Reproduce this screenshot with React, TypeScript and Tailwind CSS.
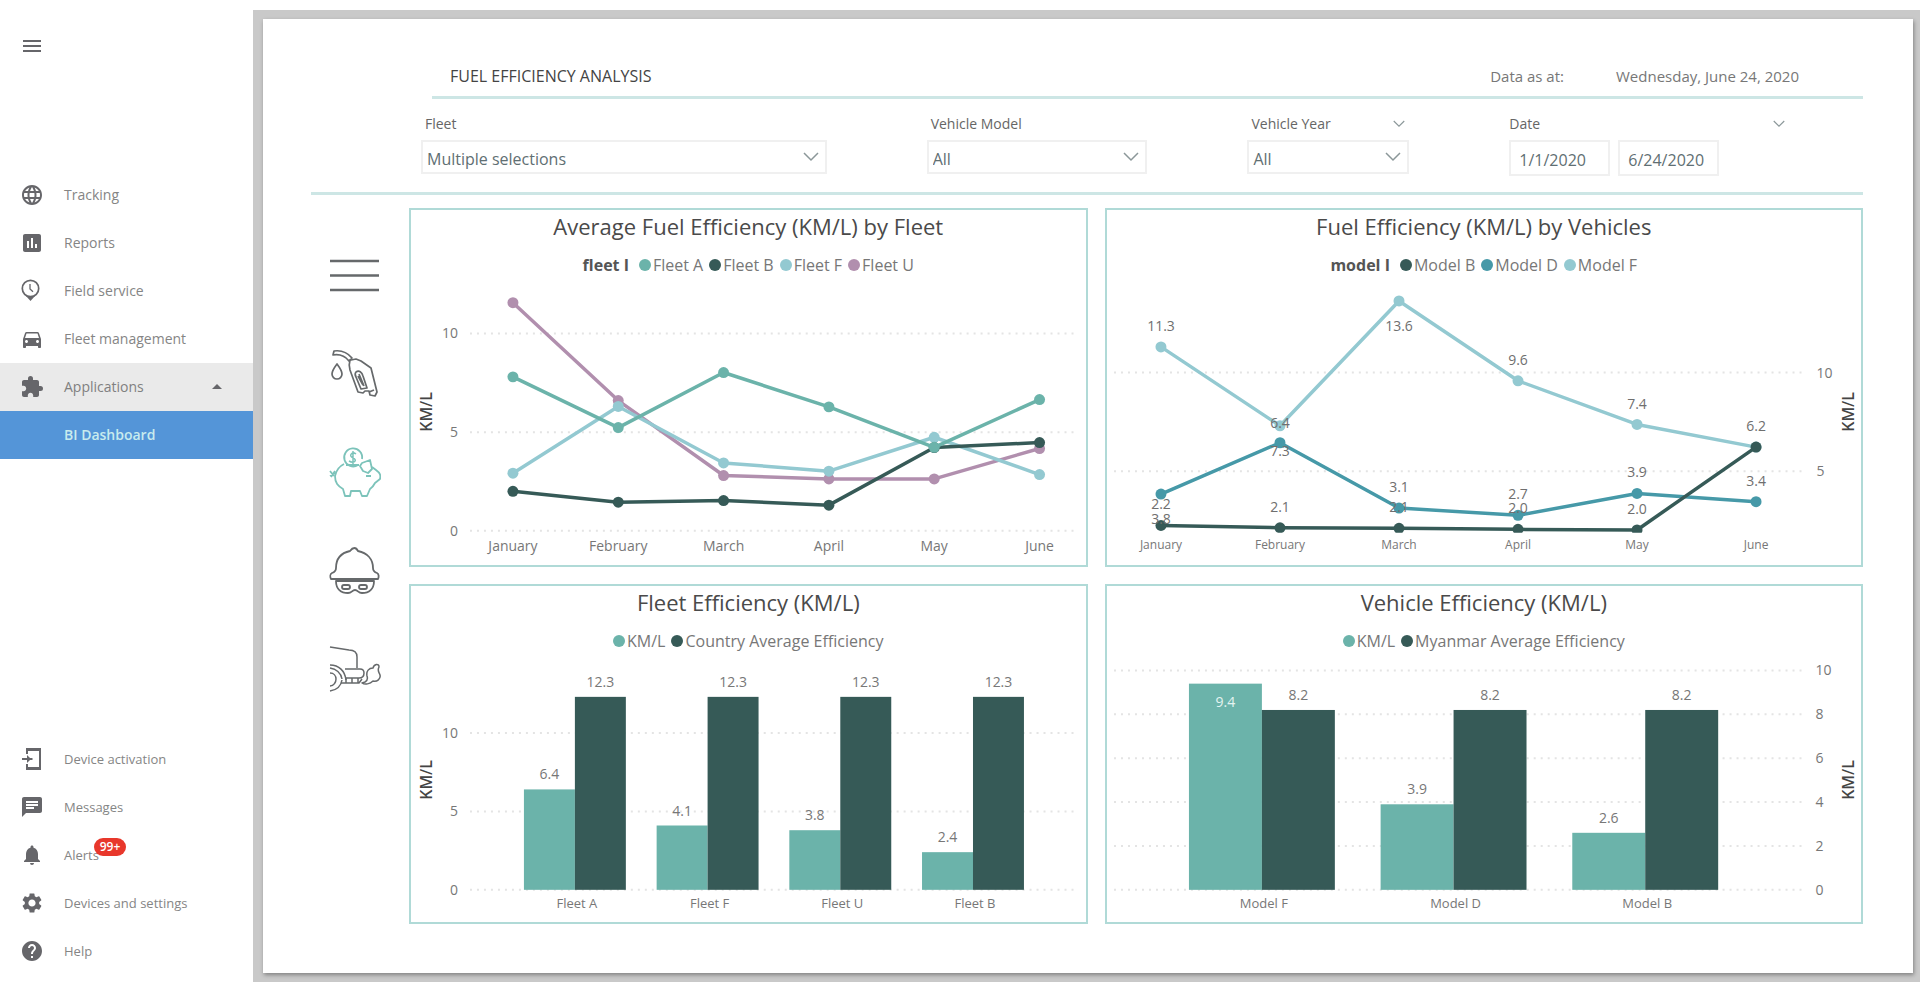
import React from 'react';
import {
  MdArrowDropUp,
  MdAssessment,
  MdChat,
  MdDirectionsCar,
  MdExtension,
  MdHelp,
  MdLanguage,
  MdMenu,
  MdNotifications,
  MdSettings,
} from 'react-icons/md';

const TEAL = '#6bb3aa';
const DARK = '#365a57';
const SKY = '#93c9d1';
const MAUVE = '#b18fae';
const OCEAN = '#4699a8';

const MONTHS = ['January', 'February', 'March', 'April', 'May', 'June'];

/* ---------- Sidebar ---------- */

function FieldServiceIcon() {
  return (
    <svg viewBox="0 0 24 24" className="size-6" fill="none" stroke="currentColor">
      <circle cx="10.5" cy="9.5" r="8.2" strokeWidth="1.7" />
      <path d="M10 5v5l3 2.800" strokeWidth="1.3" />
      <path d="M6 17h9l-4.500 5z" fill="currentColor" stroke="none" />
    </svg>
  );
}

function DeviceActivationIcon() {
  return (
    <svg viewBox="0 0 24 24" className="size-6" fill="none" stroke="currentColor" strokeWidth="2">
      <path d="M7 7V2h13v20H7v-5" />
      <path d="M7 2.500h13M7 21.500h13" strokeWidth="3" />
      <path d="M2 12h10.500" />
      <path d="M7 8l4 4-4 4z" fill="currentColor" stroke="none" />
    </svg>
  );
}

type NavItemProps = {
  icon?: React.ReactNode;
  label: string;
  badge?: string;
};

function NavItem({ icon, label, badge }: NavItemProps) {
  return (
    <li>
      <a href="#" className="flex h-12 items-center gap-5 pl-5 text-[#858585]">
        <span className="flex size-6 shrink-0 items-center justify-center text-[#66666a]">{icon}</span>
        <span className="relative">
          {label}
          {badge && (
            <span className="absolute -top-2 left-[30px] flex h-[18px] w-8 items-center justify-center rounded-full bg-[#e8372b] text-xs font-semibold text-white">
              {badge}
            </span>
          )}
        </span>
      </a>
    </li>
  );
}

function Sidebar() {
  return (
    <nav className="flex w-[253px] shrink-0 flex-col bg-white pb-[7px] text-sm">
      <button type="button" aria-label="Toggle menu" className="ml-5 mt-[34px] flex size-6 items-center text-[#66666a]">
        <MdMenu className="size-6" />
      </button>

      <ul className="mt-[113px]">
        <NavItem icon={<MdLanguage className="size-6" />} label="Tracking" />
        <NavItem icon={<MdAssessment className="size-6" />} label="Reports" />
        <NavItem icon={<FieldServiceIcon />} label="Field service" />
        <NavItem icon={<MdDirectionsCar className="size-6" />} label="Fleet management" />
        <li>
          <button type="button" className="flex h-12 w-full items-center gap-5 bg-[#eaeaea] pl-5 pr-6 text-[#808080]">
            <MdExtension className="size-6 text-[#66666a]" />
            <span className="grow text-left">Applications</span>
            <MdArrowDropUp className="size-6 text-[#66666a]" />
          </button>
          <a href="#" className="flex h-12 items-center bg-[#5495d8] pl-16 font-semibold text-[#c8ebee]">
            BI Dashboard
          </a>
        </li>
      </ul>

      <ul className="mt-auto text-[13px]">
        <NavItem icon={<DeviceActivationIcon />} label="Device activation" />
        <NavItem icon={<MdChat className="size-6" />} label="Messages" />
        <NavItem icon={<MdNotifications className="size-6" />} label="Alerts" badge="99+" />
        <NavItem icon={<MdSettings className="size-6" />} label="Devices and settings" />
        <NavItem icon={<MdHelp className="size-6" />} label="Help" />
      </ul>
    </nav>
  );
}

/* ---------- Report header and filters ---------- */

function Chevron({ className }: { className: string }) {
  return (
    <svg viewBox="0 0 16 10" className={className} fill="none" stroke="#8b9799" strokeWidth="1.5">
      <path d="M1 1l7 7 7-7" />
    </svg>
  );
}

type FilterSelectProps = {
  id: string;
  label: string;
  value: string;
  collapsible?: boolean;
};

function FilterSelect({ id, label, value, collapsible }: FilterSelectProps) {
  return (
    <div>
      <div className="flex items-center justify-between px-1">
        <label htmlFor={id} className="text-sm font-medium leading-5 text-[#666]">
          {label}
        </label>
        {collapsible && (
          <button type="button" aria-label={`Collapse ${label}`}>
            <Chevron className="h-2 w-3" />
          </button>
        )}
      </div>
      <div className="relative mt-1.5">
        <select
          id={id}
          defaultValue={value}
          className="h-[34px] w-full appearance-none border-2 border-[#f0f0f0] bg-white pl-1 pt-1 text-base leading-6 text-[#5f6f73]"
        >
          <option>{value}</option>
        </select>
        <Chevron className="pointer-events-none absolute right-2 top-3 h-2.5 w-4" />
      </div>
    </div>
  );
}

function DateFilter() {
  return (
    <div>
      <div className="flex items-center justify-between pr-[78px]">
        <label htmlFor="date-from" className="text-sm font-medium leading-5 text-[#666]">
          Date
        </label>
        <button type="button" aria-label="Collapse Date">
          <Chevron className="h-2 w-3" />
        </button>
      </div>
      <div className="mt-1.5 flex gap-2">
        <input
          id="date-from"
          type="text"
          defaultValue="1/1/2020"
          className="h-9 w-[101px] border-2 border-[#f0f0f0] pl-2 pt-1 text-base text-[#5f6f73]"
        />
        <input
          type="text"
          aria-label="Date to"
          defaultValue="6/24/2020"
          className="h-9 w-[101px] border-2 border-[#f0f0f0] pl-2 pt-1 text-base text-[#5f6f73]"
        />
      </div>
    </div>
  );
}

function ReportHeader() {
  return (
    <header className="border-b-3 border-[#cde6e5]">
      <div className="ml-[121px] flex items-center border-b-3 border-[#cde6e5] pb-2 pl-[18px] pr-16 pt-[45px] text-base leading-6">
        <h1 className="grow text-[#444]">FUEL EFFICIENCY ANALYSIS</h1>
        <span className="mr-[52px] text-[15px] text-[#777]">Data as at:</span>
        <span className="text-[15px] text-[#777]">Wednesday, June 24, 2020</span>
      </div>
      <div className="grid h-[93px] grid-cols-[406fr_221fr_162fr_354fr] gap-[100px] pl-[110px] pt-[15px]">
        <FilterSelect id="fleet" label="Fleet" value="Multiple selections" />
        <FilterSelect id="vehicle-model" label="Vehicle Model" value="All" />
        <FilterSelect id="vehicle-year" label="Vehicle Year" value="All" collapsible />
        <DateFilter />
      </div>
    </header>
  );
}

/* ---------- Icon rail ---------- */

function IconRail() {
  return (
    <div className="flex w-[98px] shrink-0 flex-col gap-[47px] pl-[18px] pt-10 text-[#66696b]">
      <button type="button" aria-label="Menu">
        <svg viewBox="0 0 52 52" className="size-[52px]" fill="none" stroke="currentColor" strokeWidth="2.500">
          <path d="M1 13h49M1 27.500h49M1 42h49" />
        </svg>
      </button>
      <button type="button" aria-label="Fuel">
        <svg viewBox="0 0 52 52" className="size-[52px]" fill="none" stroke="currentColor" strokeWidth="1.700" strokeLinejoin="round">
          <path d="M5 4l-1 4c6-1 12 1 16 6l3-3C18 5 12 3 5 4z" />
          <path d="M22 13l5-1 5 2 10 7 2 8 4 16-2 4-5-1-1-4h-4l-2 2-5-1-8-22c-1-4-1-7 0-10z" />
          <path d="M27 25c3-2 6 0 7 4l4 12-6 1-5-12c-1-2-1-4 0-5zM29 29l5 9M30 27l5 12M40 45l5-2" />
          <path d="M8 17c3 4 5 7 5 10a5 5 0 0 1-10 0c0-3 2-6 5-10z" />
        </svg>
      </button>
      <button type="button" aria-label="Savings">
        <svg viewBox="0 0 52 52" className="size-[52px]" fill="none" stroke="#7cc3ba" strokeWidth="1.800" strokeLinejoin="round">
          <path d="M29 19a9 9 0 1 1 4-6" />
          <path d="M27 8c-4-3-8 2-3 4s1 6-4 3M24 5v13" strokeWidth="1.500" />
          <path d="M15 18C9 21 7 25 6 30c0 7 3 10 8 13l2 7h5l1-5h9l2 5h5l3-7c3-2 4-4 5-6l5-4c1-4 0-6-4-9l-4-3" />
          <path d="M17 19h13M33 17l8-3 2 9-4 4-5-2-3-5z" />
          <path d="M37 30h5M1 25l4 5M1 30l5-3M6 25l-4 6" />
        </svg>
      </button>
      <button type="button" aria-label="Driver">
        <svg viewBox="0 0 52 52" className="size-[52px]" fill="none" stroke="currentColor" strokeWidth="1.800" strokeLinejoin="round">
          <path d="M21 6c3-4 6-4 8 0 9 2 15 8 15 17 0 3 1 4 4 5 2 1 2 4 1 6H2c-1-2-1-5 1-6 3-1 4-2 4-5C7 14 12 8 21 6z" />
          <path d="M7 36c0 8 5 12 12 12 4 0 4-3 7-3s3 3 7 3c7 0 12-4 12-12z" />
          <rect x="13" y="40" width="8" height="4" rx="2" />
          <rect x="30" y="40" width="8" height="4" rx="2" />
        </svg>
      </button>
      <button type="button" aria-label="Emissions">
        <svg viewBox="0 0 52 52" className="size-[52px]" fill="none" stroke="currentColor" strokeWidth="1.500" strokeLinejoin="round">
          <path d="M1 3l19 3c5 0 8 2 8 7v11" />
          <path d="M1 21c9 0 15 6 16 15M1 24c6 1 11 5 12 11M1 29c4 0 6 3 6 6s-2 7-6 7M1 47c7-1 11-5 12-11" />
          <path d="M16 25h15c3 0 4 2 4 4 0 3-2 5-5 5H17M12 39h18l3-4M17 34v5M23 34v5M29 34v5" />
          <path d="M36 38c2-1 3-3 2-6-1-5 2-8 6-8 1-4 6-5 6-1-2 4 0 5 1 8 1 4-3 7-7 6-3 3-8 4-11 2z" />
        </svg>
      </button>
    </div>
  );
}

/* ---------- Charts ---------- */

type LegendEntry = { label: string; color: string };

type ChartCardProps = {
  title: string;
  legendTitle?: string;
  legend: LegendEntry[];
  children: React.ReactNode;
};

function ChartCard({ title, legendTitle, legend, children }: ChartCardProps) {
  return (
    <section className="border-2 border-[#b0dad7] bg-white">
      <h2 className="text-center text-[22px] leading-8 text-[#4a4a4a]">{title}</h2>
      <div className="mt-2.5 flex items-center justify-center gap-1.5 text-base leading-[26px] text-[#777]">
        {legendTitle && <span className="mr-1 font-bold text-[#555]">{legendTitle}</span>}
        {legend.map((entry) => (
          <span key={entry.label} className="flex items-center gap-0.5">
            <span className="size-3 rounded-full" style={{ backgroundColor: entry.color }} />
            {entry.label}
          </span>
        ))}
      </div>
      {children}
    </section>
  );
}

type AxisProps = {
  ticks: number[];
  y: (value: number) => number;
  x1: number;
  x2: number;
  labelX: number;
  anchor: 'start' | 'end';
};

function ValueAxis({ ticks, y, x1, x2, labelX, anchor }: AxisProps) {
  return (
    <g>
      {ticks.map((tick) => (
        <g key={tick}>
          <line x1={x1} x2={x2} y1={y(tick)} y2={y(tick)} stroke="#e4e4e4" strokeWidth="2" strokeDasharray="2 5" />
          <text x={labelX} y={y(tick) + 5} textAnchor={anchor} fontSize="14" fill="#777">
            {tick}
          </text>
        </g>
      ))}
    </g>
  );
}

function AxisTitle({ x, y }: { x: number; y: number }) {
  return (
    <text transform={`translate(${x} ${y}) rotate(-90)`} textAnchor="middle" fontSize="16" fontWeight="600" fill="#444">
      KM/L
    </text>
  );
}

type Series = { name: string; color: string; values: number[] };

function Lines({ series, x, y }: { series: Series[]; x: (i: number) => number; y: (v: number) => number }) {
  return (
    <g>
      {series.map((s) => (
        <g key={s.name}>
          <polyline
            points={s.values.map((v, i) => `${x(i)},${y(v)}`).join(' ')}
            fill="none"
            stroke={s.color}
            strokeWidth="3.500"
            strokeLinejoin="round"
          />
          {s.values.map((v, i) => (
            <circle key={i} cx={x(i)} cy={y(v)} r="5.500" fill={s.color} />
          ))}
        </g>
      ))}
    </g>
  );
}

const fleetSeries: Series[] = [
  { name: 'Fleet U', color: MAUVE, values: [11.56, 6.6, 2.8, 2.63, 2.63, 4.17] },
  { name: 'Fleet F', color: SKY, values: [2.92, 6.3, 3.44, 3.02, 4.74, 2.85] },
  { name: 'Fleet B', color: DARK, values: [2.0, 1.45, 1.53, 1.3, 4.22, 4.47] },
  { name: 'Fleet A', color: TEAL, values: [7.8, 5.23, 8.02, 6.28, 4.23, 6.65] },
];

function FleetLineChart() {
  const x = (i: number) => 102 + i * 105.4;
  const y = (v: number) => 253 - v * 19.75;
  return (
    <svg viewBox="0 0 675 287" className="block w-full">
      <ValueAxis ticks={[0, 5, 10]} y={y} x1={59} x2={668} labelX={47} anchor="end" />
      <AxisTitle x={21} y={134} />
      <Lines series={fleetSeries} x={x} y={y} />
      {MONTHS.map((month, i) => (
        <text key={month} x={x(i)} y="273" textAnchor="middle" fontSize="14" fill="#777">
          {month}
        </text>
      ))}
    </svg>
  );
}

const vehicleSeries: Series[] = [
  { name: 'Model F', color: SKY, values: [11.3, 7.3, 13.63, 9.58, 7.37, 6.22] },
  { name: 'Model D', color: OCEAN, values: [3.84, 6.44, 3.13, 2.76, 3.87, 3.45] },
  { name: 'Model B', color: DARK, values: [2.25, 2.13, 2.1, 2.05, 2.02, 6.22] },
];

// [month index, baseline, label]
const vehicleLabels: [number, number, string][] = [
  [0, 53, '11.3'],
  [0, 231, '2.2'],
  [0, 246, '3.8'],
  [1, 150, '6.4'],
  [1, 178, '7.3'],
  [1, 234, '2.1'],
  [2, 53, '13.6'],
  [2, 214, '3.1'],
  [2, 234, '2.1'],
  [3, 87, '9.6'],
  [3, 221, '2.7'],
  [3, 235, '2.0'],
  [4, 131, '7.4'],
  [4, 199, '3.9'],
  [4, 236, '2.0'],
  [5, 153, '6.2'],
  [5, 208, '3.4'],
];

function VehicleLineChart() {
  const x = (i: number) => 54 + i * 119.1;
  const y = (v: number) => 292 - v * 19.74;
  return (
    <svg viewBox="0 0 755 287" className="block w-full">
      <clipPath id="plot-area">
        <rect x="0" y="0" width="755" height="255" />
      </clipPath>
      <ValueAxis ticks={[5, 10]} y={y} x1={7} x2={700} labelX={710} anchor="start" />
      <AxisTitle x={748} y={134} />
      <g clipPath="url(#plot-area)">
        <Lines series={vehicleSeries} x={x} y={y} />
      </g>
      {vehicleLabels.map(([month, baseline, label]) => (
        <text key={`${month}-${baseline}`} x={x(month)} y={baseline} textAnchor="middle" fontSize="14" fill="#6f6f6f">
          {label}
        </text>
      ))}
      {MONTHS.map((month, i) => (
        <text key={month} x={x(i)} y="271" textAnchor="middle" fontSize="12" fill="#777">
          {month}
        </text>
      ))}
    </svg>
  );
}

type BarGroup = { name: string; value: number; average: number };

type BarsProps = {
  groups: BarGroup[];
  start: number;
  step: number;
  width: number;
  y: (v: number) => number;
  insideAbove?: number;
};

function Bars({ groups, start, step, width, y, insideAbove = Infinity }: BarsProps) {
  return (
    <g textAnchor="middle" fontSize="14" fill="#777">
      {groups.map((group, i) => {
        const left = start + i * step;
        const inside = group.value > insideAbove;
        return (
          <g key={group.name}>
            <rect x={left} y={y(group.value)} width={width} height={y(0) - y(group.value)} fill={TEAL} />
            <rect x={left + width} y={y(group.average)} width={width} height={y(0) - y(group.average)} fill={DARK} />
            <text x={left + width / 2} y={y(group.value) + (inside ? 23 : -10)} fill={inside ? '#e4f3f1' : '#777'}>
              {group.value}
            </text>
            <text x={left + width * 1.5} y={y(group.average) - 10}>
              {group.average}
            </text>
            <text x={left + width + 2} y={y(0) + 18} fontSize="13">
              {group.name}
            </text>
          </g>
        );
      })}
    </g>
  );
}

const fleetBars: BarGroup[] = [
  { name: 'Fleet A', value: 6.4, average: 12.3 },
  { name: 'Fleet F', value: 4.1, average: 12.3 },
  { name: 'Fleet U', value: 3.8, average: 12.3 },
  { name: 'Fleet B', value: 2.4, average: 12.3 },
];

function FleetBarChart() {
  const y = (v: number) => 236 - v * 15.7;
  return (
    <svg viewBox="0 0 675 268" className="block w-full">
      <ValueAxis ticks={[0, 5, 10]} y={y} x1={59} x2={668} labelX={47} anchor="end" />
      <AxisTitle x={21} y={126} />
      <Bars groups={fleetBars} start={113} step={132.800} width={51} y={y} />
    </svg>
  );
}

const vehicleBars: BarGroup[] = [
  { name: 'Model F', value: 9.4, average: 8.2 },
  { name: 'Model D', value: 3.9, average: 8.2 },
  { name: 'Model B', value: 2.6, average: 8.2 },
];

function VehicleBarChart() {
  const y = (v: number) => 236 - v * 21.95;
  return (
    <svg viewBox="0 0 755 268" className="block w-full">
      <ValueAxis ticks={[0, 2, 4, 6, 8, 10]} y={y} x1={7} x2={700} labelX={709} anchor="start" />
      <AxisTitle x={748} y={126} />
      <Bars groups={vehicleBars} start={82} step={191.800} width={73} y={y} insideAbove={9} />
    </svg>
  );
}

export default function App() {
  return (
    <div className="flex min-h-screen bg-white font-['Open_Sans',sans-serif]">
      <Sidebar />
      <div className="mt-2.5 flex grow bg-[#c9c9c9] pb-[9px] pl-2.5 pr-[7px] pt-[9px]">
        <main className="grow bg-white pl-12 pr-[50px] shadow-[1px_2px_4px_rgba(0,0,0,0.35)]">
          <ReportHeader />
          <div className="flex pt-[13px]">
            <IconRail />
            <div className="grid grow grid-cols-[679fr_759fr] gap-[17px]">
              <ChartCard
                title="Average Fuel Efficiency (KM/L) by Fleet"
                legendTitle="fleet I"
                legend={[
                  { label: 'Fleet A', color: TEAL },
                  { label: 'Fleet B', color: DARK },
                  { label: 'Fleet F', color: SKY },
                  { label: 'Fleet U', color: MAUVE },
                ]}
              >
                <FleetLineChart />
              </ChartCard>
              <ChartCard
                title="Fuel Efficiency (KM/L) by Vehicles"
                legendTitle="model I"
                legend={[
                  { label: 'Model B', color: DARK },
                  { label: 'Model D', color: OCEAN },
                  { label: 'Model F', color: SKY },
                ]}
              >
                <VehicleLineChart />
              </ChartCard>
              <ChartCard
                title="Fleet Efficiency (KM/L)"
                legend={[
                  { label: 'KM/L', color: TEAL },
                  { label: 'Country Average Efficiency', color: DARK },
                ]}
              >
                <FleetBarChart />
              </ChartCard>
              <ChartCard
                title="Vehicle Efficiency (KM/L)"
                legend={[
                  { label: 'KM/L', color: TEAL },
                  { label: 'Myanmar Average Efficiency', color: DARK },
                ]}
              >
                <VehicleBarChart />
              </ChartCard>
            </div>
          </div>
        </main>
      </div>
    </div>
  );
}
